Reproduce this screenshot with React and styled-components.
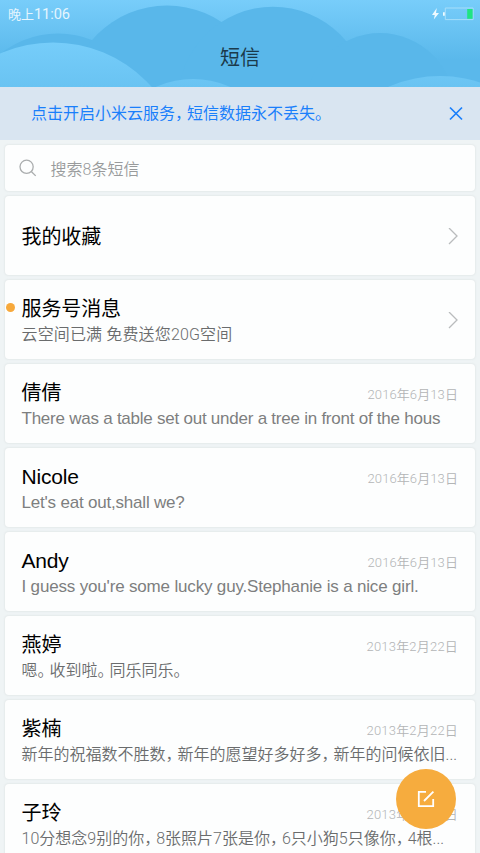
import React from "react";
import styled, { createGlobalStyle, css } from "styled-components";

const GlobalStyle = createGlobalStyle`
  html, body { margin: 0; height: 853px; overflow: hidden; }
  body {
    background: #eff4f5;
    font-family: Roboto, "Noto Sans CJK SC", sans-serif;
    color: #000;
  }
  *, *::before, *::after { box-sizing: border-box; }
`;

const Screen = styled.main`
  display: flex;
  flex-direction: column;
  position: relative;
  width: 480px;
  height: 853px;
  overflow: hidden;
`;

const Header = styled.header`
  position: relative;
  flex: none;
  height: 87px;
  display: flex;
  flex-direction: column;
  background: linear-gradient(#78cdfa 0, #5ab8eb 60px);
  overflow: hidden;
`;

const Clouds = styled.svg`
  position: absolute;
  inset: 0;
`;

const StatusBar = styled.div`
  position: relative;
  display: flex;
  justify-content: space-between;
  align-items: center;
  height: 28px;
  padding: 0 6px 0 8px;
  color: #e4f5fe;
  line-height: 28px;
`;

const Clock = styled.span`
  font-size: ${(p) => (p.$digits ? "14.6px" : "13px")};
  letter-spacing: ${(p) => (p.$digits ? "-0.1px" : "0")};
`;

const Title = styled.h1`
  position: relative;
  margin: 0;
  height: 59px;
  padding-top: 1px;
  text-align: center;
  font-size: 20px;
  line-height: 59px;
  font-weight: 400;
  color: #1b3a4b;
`;

const Banner = styled.div`
  flex: none;
  display: flex;
  align-items: center;
  justify-content: space-between;
  height: 53px;
  padding: 0 16px 0 31px;
  background: #d9e5f1;
  color: #1a7ffb;
  font-size: 16px;
  line-height: 53px;
  white-space: nowrap;
`;

const List = styled.div`
  display: flex;
  flex-direction: column;
  gap: 5px;
  padding: 5px;
`;

const card = css`
  flex: none;
  background: #fdfefe;
  border-radius: 4px;
  box-shadow: 0 0 1.5px 0.5px #e6ebec;
`;

const SearchBox = styled.div`
  ${card}
  display: flex;
  align-items: center;
  gap: 14px;
  height: 46px;
  padding: 0 0 1px 13.5px;
  color: #999b9c;
  font-size: 16px;
  font-weight: 350;
`;

const Card = styled.article`
  ${card}
  position: relative;
  display: flex;
  align-items: center;
  height: 79px;
  padding: 2px 17px 0 16.5px;
`;

const CardBody = styled.div`
  flex: 1;
  min-width: 0;
`;

const TopLine = styled.div`
  display: flex;
  justify-content: space-between;
  height: 28px;
`;

const Name = styled.h2`
  margin: 0;
  font-family: ${(p) => (p.$latin ? `"Liberation Sans", sans-serif` : "inherit")};
  font-size: ${(p) => (p.$latin ? "21px" : "20px")};
  line-height: 28px;
  font-weight: 400;
  letter-spacing: ${(p) => (p.$latin ? "-0.2px" : "-0.1px")};
`;

const DateText = styled.time`
  font-size: 13px;
  line-height: 31px;
  font-weight: 350;
  color: #b3b5b6;
  letter-spacing: ${(p) => p.$spacing};
`;

const Preview = styled.p`
  margin: 0;
  height: 23px;
  white-space: pre;
  font-family: ${(p) => (p.$latin ? `"Liberation Sans", sans-serif` : "inherit")};
  font-size: ${(p) => (p.$latin ? "17px" : "16px")};
  line-height: 23px;
  font-weight: ${(p) => (p.$latin ? 400 : 350)};
  color: ${(p) => (p.$latin ? "#7d7f80" : "#6a6c6d")};
  letter-spacing: ${(p) => p.$spacing || "0"};
`;

const Punctuation = styled.span`
  font-feature-settings: "halt";
  margin-right: 4px;
`;

const UnreadDot = styled.i`
  position: absolute;
  left: 1px;
  top: 23px;
  width: 9px;
  height: 9px;
  border-radius: 50%;
  background: #f7a93c;
`;

const ComposeButton = styled.button`
  position: absolute;
  left: 396px;
  top: 769px;
  width: 60px;
  height: 60px;
  padding: 0;
  border: 0;
  border-radius: 50%;
  background: #f6ac3e;
  display: grid;
  place-items: center;
`;

const Icon = styled.svg`
  display: block;
  flex: none;
  fill: none;
`;

const compact = (text) =>
  text.split(/([，。])/).map((part, i) =>
    /[，。]/.test(part) ? <Punctuation key={i}>{part}</Punctuation> : part
  );

const Chevron = () => (
  <Icon width="10" height="18" viewBox="0 0 10 18" stroke="#b9bcbd" strokeWidth="1.3">
    <path d="M1 0l8 8-8 8" />
  </Icon>
);

const Battery = () => (
  <Icon width="42" height="14" viewBox="0 0 42 14">
    <path d="M4.8 1L0 8h2.8L1.8 12.5 7 6H4z" fill="#eefaff" />
    <path d="M11 5.3h1.9v3.4H11z" fill="#eefaff" />
    <path d="M13.3 1h27.8v11.6H13.3z" stroke="#a7defa" strokeWidth="1" />
    <path d="M35.2 2h5.4v9.8h-5.4z" fill="#20e482" />
  </Icon>
);

const threads = [
  { name: "我的收藏", link: true },
  { name: "服务号消息", preview: "云空间已满 免费送您20G空间", link: true, unread: true, spacing: "0.15px" },
  { name: "倩倩", date: "2016年6月13日", preview: "There was a table set out under a tree in front of the hous", latin: true, spacing: "-0.24px" },
  { name: "Nicole", date: "2016年6月13日", preview: "Let's eat out,shall we?", latin: true, latinName: true, spacing: "-0.2px" },
  { name: "Andy", date: "2016年6月13日", preview: "I guess you're some lucky guy.Stephanie is a nice girl.", latin: true, latinName: true, spacing: "-0.17px" },
  { name: "燕婷", date: "2013年2月22日", preview: "嗯。收到啦。同乐同乐。" },
  { name: "紫楠", date: "2013年2月22日", preview: "新年的祝福数不胜数，新年的愿望好多好多，新年的问候依旧..." },
  { name: "子玲", date: "2013年2月22日", preview: "10分想念9别的你，8张照片7张是你，6只小狗5只像你，4根..." },
];

export default function App() {
  return (
    <Screen>
      <GlobalStyle />
      <Header>
        <Clouds width="480" height="87" viewBox="0 0 480 87">
          <defs>
            <linearGradient id="front" gradientUnits="userSpaceOnUse" x1="0" y1="42" x2="0" y2="87">
              <stop offset="0" stopColor="#76cdfa" />
              <stop offset="1" stopColor="#69c3f2" />
            </linearGradient>
          </defs>
          <g fill="#59b7ea">
            <circle cx="58" cy="125.5" r="92" />
            <circle cx="167" cy="104.3" r="98.8" />
            <circle cx="273" cy="101.7" r="95" />
            <circle cx="380" cy="107" r="74" />
          </g>
          <g fill="url(#front)">
            <circle cx="53" cy="174.5" r="132" />
            <circle cx="193" cy="170" r="91" />
            <circle cx="440" cy="204" r="128" />
          </g>
        </Clouds>
        <StatusBar>
          <span><Clock>晚上</Clock><Clock $digits>11:06</Clock></span>
          <Battery />
        </StatusBar>
        <Title>短信</Title>
      </Header>
      <Banner>
        <span>{compact("点击开启小米云服务，短信数据永不丢失。")}</span>
        <Icon width="16" height="16" viewBox="0 0 16 16" stroke="#1a7ffb" strokeWidth="1.7">
          <path d="M2 1.5l12 12M14 1.5L2 13.5" />
        </Icon>
      </Banner>
      <List>
        <SearchBox>
          <Icon width="18" height="18" viewBox="0 0 18 18" stroke="#aaadae" strokeWidth="1.3">
            <circle cx="7.6" cy="7.8" r="6.6" />
            <path d="M12.3 12.5l4.4 4.4" />
          </Icon>
          <span>搜索8条短信</span>
        </SearchBox>
        {threads.map((t) => (
          <Card key={t.name}>
            {t.unread && <UnreadDot />}
            <CardBody>
              <TopLine>
                <Name $latin={t.latinName}>{t.name}</Name>
                {t.date && (
                  <DateText $spacing={t.date.startsWith("2013") ? "0.2px" : "0.1px"}>{t.date}</DateText>
                )}
              </TopLine>
              {t.preview && (
                <Preview $latin={t.latin} $spacing={t.spacing}>{compact(t.preview)}</Preview>
              )}
            </CardBody>
            {t.link && <Chevron />}
          </Card>
        ))}
      </List>
      <ComposeButton aria-label="新建短信">
        <Icon width="20" height="20" viewBox="0 0 20 20" stroke="#fff" strokeWidth="1.8">
          <path d="M10 2.8H2.8v14.4h14.4V10M8 12L17.4 2.6" />
        </Icon>
      </ComposeButton>
    </Screen>
  );
}
